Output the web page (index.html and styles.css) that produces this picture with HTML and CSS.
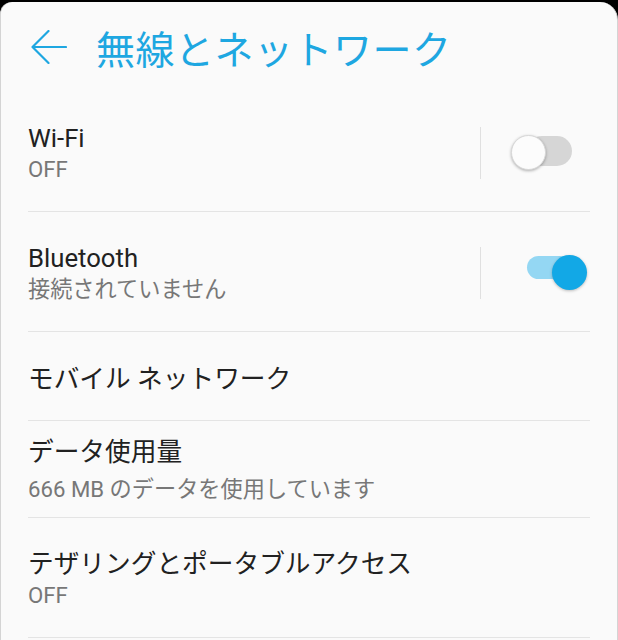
FILE: index.html
```html
<!DOCTYPE html>
<html lang="ja">
<head>
<meta charset="utf-8">
<title>無線とネットワーク</title>
<link rel="stylesheet" href="styles.css">
</head>
<body>
<div class="screen">
  <div class="card">
    <header class="header">
      <svg class="back" width="36" height="34" viewBox="0 0 36 34" aria-hidden="true">
        <path d="M1.5 17 H35 M17.5 1 L1.5 17 L17.5 33" fill="none" stroke="#1ea7e1" stroke-width="2.2" stroke-linecap="round" stroke-linejoin="round"/>
      </svg>
      <h1 class="title">無線とネットワーク</h1>
    </header>
    <ul class="list">
      <li class="row">
        <div class="text">
          <div class="label">Wi-Fi</div>
          <div class="sub">OFF</div>
        </div>
        <div class="sep"></div>
        <div class="switch">
          <div class="track off"></div>
          <div class="thumb off"></div>
        </div>
      </li>
      <li class="row">
        <div class="text">
          <div class="label">Bluetooth</div>
          <div class="sub">接続されていません</div>
        </div>
        <div class="sep"></div>
        <div class="switch">
          <div class="track on"></div>
          <div class="thumb on"></div>
        </div>
      </li>
      <li class="row single">
        <div class="text">
          <div class="label">モバイル ネットワーク</div>
        </div>
      </li>
      <li class="row compact">
        <div class="text">
          <div class="label">データ使用量</div>
          <div class="sub">666 MB のデータを使用しています</div>
        </div>
      </li>
      <li class="row">
        <div class="text">
          <div class="label">テザリングとポータブルアクセス</div>
          <div class="sub">OFF</div>
        </div>
      </li>
    </ul>
  </div>
</div>
</body>
</html>
```
FILE: styles.css
```css
html, body {
  margin: 0;
  padding: 0;
  background: #000;
}
.screen {
  width: 618px;
  height: 640px;
  padding-top: 2px;
  box-sizing: border-box;
  background: #000;
  overflow: hidden;
}
.card {
  height: 638px;
  background: #fafafa;
  border-left: 1px solid #d4d4d4;
  border-right: 1px solid #d4d4d4;
  border-radius: 12px 18px 0 0;
  box-sizing: border-box;
  font-family: Roboto, "Noto Sans CJK JP", sans-serif;
}
.header {
  height: 90px;
  display: flex;
  align-items: center;
  padding-left: 30px;
  box-sizing: border-box;
}
.back {
  display: block;
  flex: none;
}
.title {
  margin: 0 0 0 29px;
  font-family: "Noto Sans CJK JP", sans-serif;
  font-weight: 400;
  font-size: 39px;
  line-height: 44px;
  color: #1ea7e1;
  letter-spacing: 0.5px;
}
.list {
  list-style: none;
  margin: 0;
  padding: 0;
}
.row {
  margin: 0 27px;
  padding: 31px 0 28px;
  border-bottom: 1px solid #e4e4e4;
  display: flex;
  align-items: center;
}
.row.single {
  padding: 32px 0 26px;
}
.row.compact {
  padding: 16px 0 14px;
}
.row.compact .sub {
  margin-top: 8px;
}
.text {
  flex: 1;
  min-width: 0;
}
.label {
  font-size: 25.7px;
  line-height: 30px;
  color: #212121;
}
.sub {
  margin-top: 2px;
  font-size: 22.2px;
  line-height: 28px;
  color: #777;
}
.sep {
  width: 1px;
  height: 52px;
  background: #e0e0e0;
  margin-right: 30px;
  flex: none;
}
.switch {
  position: relative;
  width: 76px;
  height: 36px;
  margin-right: 3px;
  flex: none;
}
.track {
  position: absolute;
  left: 16px;
  width: 45px;
}
.track.off {
  top: 1px;
  height: 30px;
  border-radius: 15px;
  background: #d6d6d6;
}
.track.on {
  top: 1px;
  height: 23px;
  border-radius: 12px;
  background: #94d7f3;
}
.thumb {
  position: absolute;
  top: 0;
  width: 35px;
  height: 35px;
  border-radius: 50%;
  box-sizing: border-box;
}
.thumb.off {
  left: 0;
  background: #fcfcfc;
  border: 1px solid #d8d8d8;
  box-shadow: 0 1px 3px rgba(0, 0, 0, 0.3);
}
.thumb.on {
  left: 41px;
  background: #12a8e6;
  box-shadow: 0 1px 3px rgba(0, 0, 0, 0.25);
}
```
